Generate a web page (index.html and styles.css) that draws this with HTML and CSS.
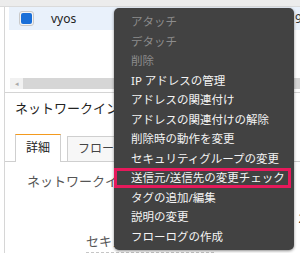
FILE: index.html
```html
<!DOCTYPE html>
<html lang="ja">
  <head>
    <meta charset="UTF-8" />
    <title>ENI actions</title>
    <link rel="stylesheet" href="styles.css">
  </head>
  <body>
    <div class="page">
      <div class="topbar"></div>
      <div class="panel">
        <div class="row">
          <span class="check"><span class="tick"></span></span>
          <span class="name">vyos</span>
          <span class="id">9</span>
        </div>
        <div class="blank"></div>
        <div class="scroll">
          <span class="arrow">&#9666;</span>
          <span class="thumb"></span>
        </div>
        <div class="heading">ネットワークインターフェース</div>
        <div class="tabs">
          <div class="tab active">詳細</div>
          <div class="tab">フローログ</div>
        </div>
        <div class="details">
          <div class="field">
            <span class="label">ネットワークインターフェース ID</span>
          </div>
          <div class="field right-val">
            <span class="val">2</span>
          </div>
          <div class="field sec">
            <span class="label dashed">セキュリティグループ</span>
          </div>
        </div>
      </div>

      <ul class="menu">
        <li class="off">アタッチ</li>
        <li class="off">デタッチ</li>
        <li class="off">削除</li>
        <li>IP アドレスの管理</li>
        <li>アドレスの関連付け</li>
        <li>アドレスの関連付けの解除</li>
        <li>削除時の動作を変更</li>
        <li>セキュリティグループの変更</li>
        <li class="hl">送信元/送信先の変更チェック</li>
        <li>タグの追加/編集</li>
        <li>説明の変更</li>
        <li>フローログの作成</li>
      </ul>
    </div>
  </body>
</html>
```

FILE: styles.css
```css
body {
  margin: 0;
  padding: 0;
  font-family: "Noto Sans", "Noto Sans CJK JP", sans-serif;
  background: #fff;
}
.page {
  width: 300px;
  height: 253px;
  position: relative;
  overflow: hidden;
  background: #fff;
}
.topbar {
  height: 6px;
  background: #ececec;
  border-bottom: 1px solid #dadada;
}
.panel {
  margin-left: 4px;
  border-left: 1px solid #d6d6d6;
  height: 246px;
}
.row {
  height: 23px;
  margin-left: 4px;
  padding-left: 10px;
  background: #e9f1fb;
  display: flex;
  align-items: center;
}
.check {
  width: 13px;
  height: 13px;
  border: 1px solid #c9c9c9;
  border-radius: 3px;
  background: #f4f4f4;
  display: flex;
  align-items: center;
  justify-content: center;
}
.tick {
  width: 11px;
  height: 11px;
  border-radius: 2px;
  background: #1a6fd8;
}
.name {
  margin-left: 17px;
  font-size: 12px;
  color: #222;
}
.id {
  margin-left: auto;
  width: 5px;
  overflow: hidden;
  font-size: 12px;
  color: #333;
}
.blank {
  height: 48px;
}
.scroll {
  height: 11px;
  margin-left: 5px;
  background: #f1f1f1;
  display: flex;
  align-items: center;
}
.arrow {
  width: 13px;
  font-size: 7px;
  color: #aaa;
  text-align: center;
}
.thumb {
  flex: 1;
  height: 11px;
  background: #d6d6d6;
}
.heading {
  border-top: 1px solid #d4d4d4;
  margin-top: 3px;
  padding: 6px 0 0 10px;
  font-size: 13px;
  line-height: 18px;
  color: #222;
}
.tabs {
  margin-top: 17px;
  padding-left: 10px;
  display: flex;
  align-items: flex-end;
  gap: 6px;
  border-bottom: 1px solid #cfcfcf;
  height: 27px;
}
.tab {
  height: 24px;
  padding: 0 10px;
  border: 1px solid #cfcfcf;
  border-bottom: none;
  background: #f7f7f7;
  font-size: 12px;
  line-height: 24px;
  color: #444;
  white-space: nowrap;
}
.tab.active {
  height: 26px;
  line-height: 25px;
  border-top: 1px solid #f39a1e;
  background: #fff;
  margin-bottom: -1px;
  height: 27px;
  color: #222;
}
.details {
  padding-left: 22px;
}
.field {
  font-size: 13px;
  line-height: 18px;
  color: #555;
  white-space: nowrap;
}
.details .field:first-child {
  margin-top: 10px;
}
.right-val {
  margin-top: 19px;
  text-align: right;
  padding-right: 0;
  margin-right: -6px;
}
.val {
  color: #333;
}
.sec {
  margin-top: 5px;
  padding-left: 59px;
}
.dashed {
  border-bottom: 1px dashed #c6c6c6;
  padding-bottom: 2px;
}

.menu {
  position: absolute;
  left: 114px;
  top: 8px;
  width: 180px;
  height: 242px;
  margin: 0;
  padding: 4px 0 0 0;
  box-sizing: border-box;
  list-style: none;
  background: #424242;
  border-radius: 5px;
  box-shadow: 0 1px 3px rgba(0, 0, 0, 0.45);
  font-family: "Noto Sans", "Noto Sans CJK JP", sans-serif;
}
.menu li {
  padding-left: 17px;
  font-size: 11.5px;
  line-height: 19.5px;
  color: #f4f4f4;
  white-space: nowrap;
}
.menu li.off {
  color: #8c8c8c;
}
.menu li.hl {
  margin-right: 3px;
  box-shadow: inset 0 0 0 3px #e6195b;
}
```
